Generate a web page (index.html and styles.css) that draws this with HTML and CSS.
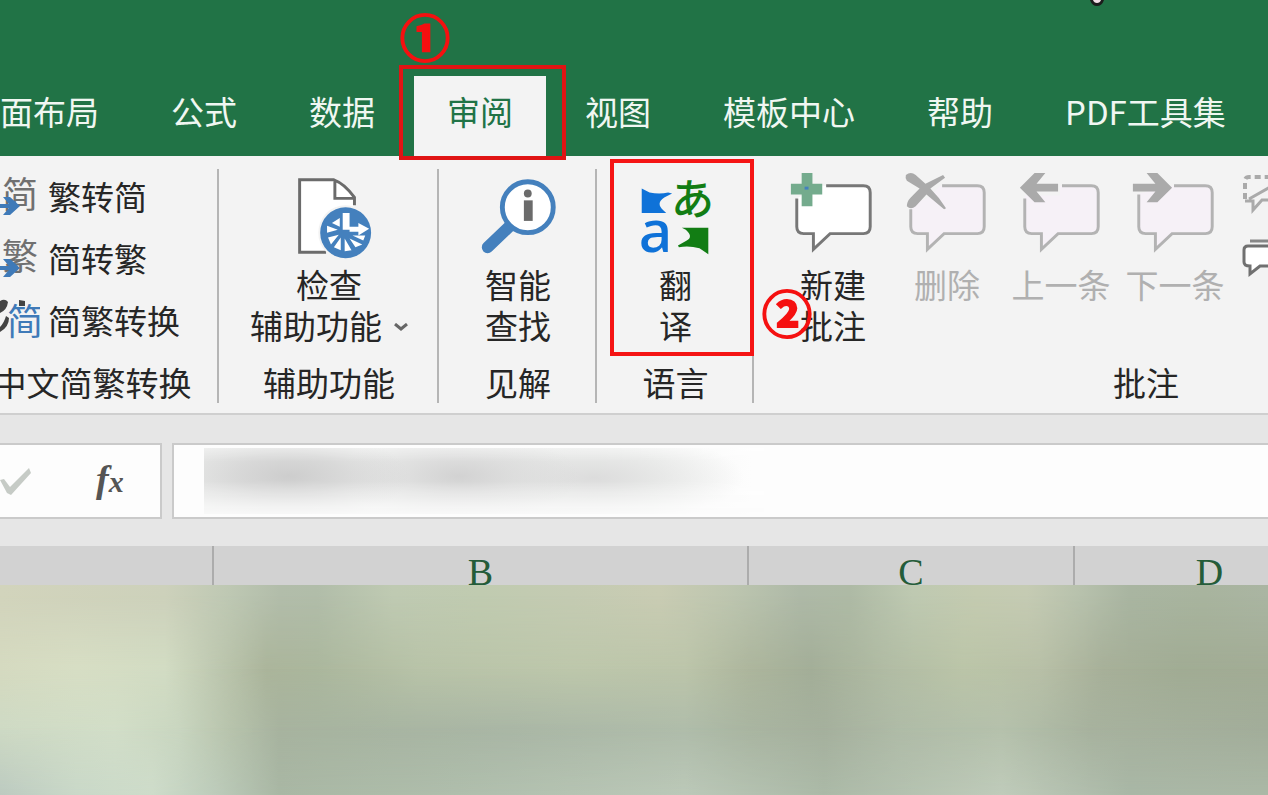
FILE: index.html
```html
<!DOCTYPE html>
<html lang="zh-CN">
<head>
<meta charset="utf-8">
<title>审阅</title>
<link rel="stylesheet" href="styles.css">
</head>
<body>
<header class="titlebar">
  <svg class="pointer" viewBox="0 0 14 6" aria-hidden="true"><path d="M0 0h14q-2 6-7 6T0 0z" fill="#1c1c1c"/><path d="M3 0h8q-1 3-4 3T3 0z" fill="#f4dfe8"/></svg>
  <nav class="tabs">
    <button class="tab">面布局</button>
    <button class="tab">公式</button>
    <button class="tab">数据</button>
    <button class="tab active">审阅<span class="frame frame-tab"></span><span class="step step-one">①</span></button>
    <button class="tab">视图</button>
    <button class="tab">模板中心</button>
    <button class="tab">帮助</button>
    <button class="tab">PDF工具集</button>
  </nav>
</header>

<main class="ribbon">
  <section class="group convert">
    <div class="rows">
      <button class="row"><svg viewBox="0 0 46 46" aria-hidden="true"><text class="glyph" x="8" y="35" fill="#707070">简</text><path d="M0 31h15l-6-7h7l10 9-10 9H9l6-7H0z" fill="#3f7ab8"/></svg>繁转简</button>
      <button class="row"><svg viewBox="0 0 46 46" aria-hidden="true"><text class="glyph" x="8" y="35" fill="#707070">繁</text><path d="M0 31h15l-6-7h7l10 9-10 9H9l6-7H0z" fill="#3f7ab8"/></svg>简转繁</button>
      <button class="row"><svg viewBox="0 0 46 46" aria-hidden="true"><path d="M6 4q5-3 8 1-1 8-8 11zM6 30q4-4 6-11l3 2q0 9-9 14zM25 3l6 1v5h-6z" fill="#444"/><text class="glyph" x="13" y="38" fill="#3f7ab8">简</text></svg>简繁转换</button>
    </div>
    <h2 class="caption">中文简繁转换</h2>
  </section>

  <section class="group access">
    <button class="large">
      <svg viewBox="0 0 90 96" aria-hidden="true">
        <path d="M15 10h35q10 2 21 20v54H15z" fill="#fff"/>
        <path d="M42 84H15V10h35q11 4 21 18v8M51 11v18h19" fill="none" stroke="#6b6b6b" stroke-width="3"/>
        <circle cx="62" cy="64" r="28" fill="#f3f3f3"/>
        <circle cx="62" cy="64" r="26" fill="#4480bd"/>
        <g fill="#fff">
          <path d="M59 44h7v17h-7zM66 58h9v-4l11 6-11 7v-4h-9z"/>
          <path d="M56 49v9l-8-4zM54 61l-11-4v7zM44 69l11-3-8 10zM50 79l7-10v13zM61 83V70l7 12zM72 79l-6-9 13 6zM80 72l-11-5h13z"/>
        </g>
      </svg>
      <span class="label">检查<br>辅助功能<svg class="chevron" viewBox="0 0 14 8" aria-hidden="true"><path d="M1 1l6 5 6-5" fill="none" stroke="#666" stroke-width="3"/></svg></span>
    </button>
    <h2 class="caption">辅助功能</h2>
  </section>

  <section class="group insight">
    <button class="large">
      <svg viewBox="0 0 90 96" aria-hidden="true">
        <path d="M37 57L14 79" stroke="#4480bd" stroke-width="12" stroke-linecap="round"/>
        <circle cx="55" cy="38" r="26" fill="#fff" stroke="#4480bd" stroke-width="5"/>
        <circle cx="55" cy="24" r="4" fill="#6b6b6b"/><path d="M51 31h9v21h-9z" fill="#6b6b6b"/>
      </svg>
      <span class="label">智能<br>查找</span>
    </button>
    <h2 class="caption">见解</h2>
  </section>

  <section class="group language">
    <button class="large">
      <svg viewBox="0 0 90 96" aria-hidden="true">
        <path d="M10 19l8 4q10 2 19 0l4 1-8 4q-9 6-1 13l3 3H10z" fill="#0f72d8"/>
        <path d="M78 86l-9-6q-11-3-21-1l-1-2 9-5q7-4-1-11l-4-2h27z" fill="#127d14"/>
        <text class="kana" x="40" y="46">あ</text>
        <text class="latin" x="7" y="84">a</text>
      </svg>
      <span class="label">翻<br>译</span>
      <span class="frame frame-button"></span>
    </button>
    <h2 class="caption">语言</h2>
  </section>

  <section class="group comments">
    <div class="buttons">
      <button class="large">
        <svg viewBox="0 0 90 96" aria-hidden="true">
          <path d="M8 29V58q0 7 7 7h10v16l17-16h34q7 0 7-7V23q0-7-7-7H30z" fill="#fff"/>
          <path d="M8 29V58q0 7 7 7h10v16l17-16h34q7 0 7-7V23q0-7-7-7H38" fill="none" stroke="#777" stroke-width="3"/>
          <path d="M13 3h11v11h10v11H24v12H13V25H2V14h11z" fill="#74ab8d"/><path d="M16 17h4v3h-4z" fill="#4480bd"/>
        </svg>
        <span class="label">新建<br>批注</span>
        <span class="step step-two">②</span>
      </button>
      <button class="large" disabled>
        <svg viewBox="0 0 90 96" aria-hidden="true">
          <path d="M8 36V58q0 7 7 7h10v16l17-16h34q7 0 7-7V23q0-7-7-7H38L26 28z" fill="#f6f1f7"/>
          <path d="M8 40V58q0 7 7 7h10v16l17-16h34q7 0 7-7V23q0-7-7-7H40" fill="none" stroke="#b3b3b3" stroke-width="3"/>
          <path d="M3 5q5-4 10 0l10 9L41 5l2 3-15 11q9 9 16 20l-2 1-18-15-11 12q-5 4-9 0 0-5 4-9l9-9L4 11q-2-3-1-6z" fill="#aaa"/>
        </svg>
        <span class="label">删除</span>
      </button>
      <button class="large" disabled>
        <svg viewBox="0 0 90 96" aria-hidden="true">
          <path d="M8 26V58q0 7 7 7h10v16l17-16h34q7 0 7-7V23q0-7-7-7H44v10z" fill="#f6f1f7"/>
          <path d="M8 29V58q0 7 7 7h10v16l17-16h34q7 0 7-7V23q0-7-7-7H46" fill="none" stroke="#b3b3b3" stroke-width="3"/>
          <path d="M3 18L18 3h11L20 14h22v8H20l9 11H18z" fill="#aaa"/>
        </svg>
        <span class="label">上一条</span>
      </button>
      <button class="large" disabled>
        <svg viewBox="0 0 90 96" aria-hidden="true">
          <path d="M8 24V58q0 7 7 7h10v16l17-16h34q7 0 7-7V23q0-7-7-7H42z" fill="#f6f1f7"/>
          <path d="M8 25V58q0 7 7 7h10v16l17-16h34q7 0 7-7V23q0-7-7-7H44" fill="none" stroke="#b3b3b3" stroke-width="3"/>
          <path d="M42 18L27 3H16l9 11H2v8h23l-9 11h11z" fill="#aaa"/>
        </svg>
        <span class="label">下一条</span>
      </button>
      <div class="minis">
        <button class="mini" aria-label="显示/隐藏批注"><svg viewBox="0 0 60 44" aria-hidden="true"><path d="M3 25V7q0-4 4-4h53" fill="none" stroke="#aaa" stroke-width="4" stroke-dasharray="6 4"/><path d="M3 27h8v9l9-10h40M7 25L30 12" fill="none" stroke="#aaa" stroke-width="3"/></svg></button>
        <button class="mini" aria-label="显示所有批注"><svg viewBox="0 0 60 44" aria-hidden="true"><path d="M60 8H6Q2 8 2 12v12q0 4 6 4v8l10-8h42z" fill="#fff" stroke="#707070" stroke-width="3"/><path d="M8 3h52" stroke="#888" stroke-width="3"/></svg></button>
      </div>
    </div>
    <h2 class="caption">批注</h2>
  </section>
</main>

<div class="formulabar">
  <div class="tools">
    <button class="tool" aria-label="输入"><svg viewBox="0 0 32 30" aria-hidden="true"><path d="M0 14l4-1 6 8L29 2l2 5-20 22-4-2z" fill="#c6cbc6"/></svg></button>
    <button class="tool fx"><i>f</i><sub>x</sub></button>
  </div>
  <div class="entry"><input class="formula" type="text" aria-label="编辑栏"><span class="smudge"></span></div>
</div>

<div class="sheet">
  <div class="columns">
    <div class="col col-a"></div>
    <div class="col col-b">B</div>
    <div class="col col-c">C</div>
    <div class="col col-d">D</div>
  </div>
  <div class="cells"><span class="tone tone-top"></span><span class="tone tone-mid"></span><span class="tone tone-low"></span><span class="tone tone-end"></span></div>
</div>
</body>
</html>
```
FILE: styles.css
```css
* { box-sizing: border-box; }
body {
  margin: 0;
  height: 100vh;
  display: flex;
  flex-direction: column;
  overflow: hidden;
  background: #e6e6e6;
  color: #262626;
  font-family: "Noto Sans CJK SC", "Noto Sans", sans-serif;
  font-size: 33px;
}
button {
  margin: 0;
  padding: 0;
  border: 0;
  background: none;
  color: inherit;
  font: inherit;
}
svg { display: block; flex: none; }

/* Title bar and tabs */
.titlebar {
  position: relative;
  z-index: 2;
  flex: none;
  padding-top: 76px;
  background: #217346;
}
.pointer {
  position: absolute;
  top: 0;
  left: 1090px;
  width: 14px;
  height: 6px;
}
.tabs {
  display: flex;
  gap: 6px;
  margin-left: -33px;
}
.tab {
  position: relative;
  flex: none;
  height: 80px;
  padding: 0 33px 10px;
  color: #f0f7f2;
  line-height: 70px;
  white-space: nowrap;
}
.tab.active { background: #f3f3f3; color: #217346; }

/* Callouts */
.frame { position: absolute; border: 4px solid #f51414; pointer-events: none; }
.frame-tab { inset: -11px -20px -4px -15px; border-color: #e01414; }
.frame-button { top: 3px; left: 13px; right: 0; height: 197px; }
.step {
  position: absolute;
  color: #f51010;
  font-size: 50px;
  font-weight: 700;
  line-height: 52px;
  -webkit-text-stroke: 2px #f51010;
}
.step-one { top: -67px; left: -14px; }
.step-two { top: 129px; left: -14px; }

/* Ribbon */
.ribbon {
  display: flex;
  flex: none;
  overflow: hidden;
  background: #f3f3f3;
  border-bottom: 2px solid #cfcfcf;
}
.group {
  position: relative;
  flex: none;
  display: flex;
  flex-direction: column;
  padding-bottom: 10px;
}
.group::after {
  content: "";
  position: absolute;
  right: 0;
  top: 13px;
  bottom: 10px;
  width: 2px;
  background: #b5b5b5;
}
.convert { width: 253px; margin-left: -34px; }
.access { width: 220px; }
.insight { width: 158px; }
.language { width: 157px; }
.comments { width: 784px; }
.caption {
  margin: 16px 0 0;
  font-size: 33px;
  font-weight: 400;
  line-height: 41px;
  text-align: center;
  white-space: nowrap;
}
.rows { height: 190px; padding: 9px 0 0 28px; }
.row {
  display: flex;
  align-items: center;
  gap: 8px;
  height: 62px;
  white-space: nowrap;
}
.row svg { width: 46px; height: 46px; }
.glyph { font-size: 36px; font-weight: 400; }
.large {
  position: relative;
  display: flex;
  flex-direction: column;
  align-items: center;
  height: 190px;
  padding-top: 14px;
  line-height: 41px;
  white-space: nowrap;
}
.large > svg { width: 90px; height: 94px; overflow: visible; }
.large:disabled { color: #b0b0b0; }
.language .frame-button { z-index: 1; }
.kana { fill: #127d14; font-size: 44px; font-weight: 500; }
.latin { fill: #0f72d8; font-family: "Noto Sans", sans-serif; font-size: 60px; font-weight: 500; }
.chevron { display: inline-block; width: 14px; height: 8px; margin-left: 12px; vertical-align: 8px; }
.buttons { display: flex; padding-left: 22px; }
.buttons .large { width: 114px; }
.minis { display: flex; flex-direction: column; gap: 20px; padding: 18px 0 0 10px; }
.mini svg { width: 60px; height: 44px; }

/* Formula bar */
.formulabar {
  display: flex;
  flex: none;
  gap: 10px;
  padding: 28px 0 27px;
}
.tools {
  display: flex;
  flex: none;
  align-items: center;
  gap: 64px;
  width: 162px;
  height: 76px;
  background: #fdfdfd;
  border: 2px solid #cacaca;
  border-left: 0;
}
.tool svg { width: 32px; height: 30px; }
.fx {
  padding-bottom: 4px;
  color: #555;
  font-family: "Liberation Serif", serif;
  font-size: 38px;
  font-style: italic;
  font-weight: 700;
  line-height: 40px;
}
.fx sub { font-size: 30px; line-height: 20px; vertical-align: baseline; }
.entry { position: relative; flex: 1; height: 76px; }
.formula {
  width: 100%;
  height: 100%;
  padding: 0 32px;
  background: #fdfdfd;
  border: 2px solid #cacaca;
  border-right: 0;
  font: inherit;
}
.smudge {
  position: absolute;
  top: 5px;
  left: 32px;
  width: 560px;
  height: 66px;
  background:
    radial-gradient(ellipse 120px 46px at 85px 28px, #cdcdcd 0, #d2d2d2bb 45%, #e5e7e600 100%),
    radial-gradient(ellipse 120px 46px at 255px 28px, #d2d2d2 0, #d8d8d8aa 45%, #e8eae900 100%),
    radial-gradient(ellipse 150px 46px at 390px 30px, #dcdcdc 0, #e2e3e2aa 50%, #fdfdfd00 100%),
    linear-gradient(90deg, #e9eae9 0, #eeefee 60%, #f6f7f6 80%, #fdfdfd 98%);
  mask-image: linear-gradient(#000a 0, #000 20%, #000 50%, #0003 100%);
  pointer-events: none;
}

/* Sheet */
.sheet { display: flex; flex: 1; flex-direction: column; min-height: 0; }
.columns { display: flex; flex: none; height: 39px; overflow: hidden; background: #d2d2d2; }
.col {
  flex: none;
  padding-top: 6px;
  border-right: 2px solid #acacac;
  color: #245c39;
  font-family: "Liberation Serif", "DejaVu Serif", serif;
  font-size: 38px;
  line-height: 40px;
  text-align: center;
}
.col-a { width: 214px; }
.col-b { width: 535px; }
.col-c { width: 326px; }
.col-d { width: 271px; }
.cells { position: relative; flex: 1; overflow: hidden; }
.tone { position: absolute; inset: 0; }
.tone-top { background: linear-gradient(90deg, #d2d4bc 0, #cdd1bb 13%, #bec8b3 18%, #b2bdaa 22%, #b1bda9 25%, #bfcab2 31%, #c0cbb0 38%, #c4cbb2 45%, #c9ccb3 52%, #bcc5af 58%, #aeb9a7 63%, #aebaa5 67%, #bec9b1 72%, #c4cbb0 77%, #c5cbb3 81%, #b8c2ad 85%, #a9b5a1 89%, #a8b49e 95%, #aab5a2); }
.tone-mid {
  background: linear-gradient(90deg, #d5dac0 0, #d7dec4 6%, #d2dcc3 13%, #bec8b0 17%, #abb59b 21%, #abb79d 25%, #b8c3a8 33%, #bdc7ab 45%, #bcc5aa 54%, #adb69d 59%, #a3ae98 64%, #b1bca4 70%, #bbc5a8 76%, #b8c0a7 82%, #a7b099 87%, #a1ac94 93%, #a2ac95);
  mask-image: linear-gradient(transparent 5%, #000 40%);
}
.tone-low {
  background: linear-gradient(90deg, #cedac4 0, #d2dec8 9%, #c9d6c0 14%, #b8c4ad 18%, #a7b39f 22%, #a7b4a0 26%, #a9b6a5 40%, #afbcaa 54%, #a9b5a1 59%, #a5b09d 65%, #afbba7 71%, #b5c1ac 79%, #a7b29e 86%, #a2ad9a);
  mask-image: linear-gradient(transparent 40%, #000 70%);
}
.tone-end {
  background: linear-gradient(90deg, #bccac0 0, #c9d8c8 6%, #cedcca 12%, #bccbba 17%, #a9b7a4 22%, #afbeac 36%, #bbc8b8 54%, #abb9a7 65%, #bfcbba 79%, #a9b7a6 89%, #abb8a6);
  mask-image: linear-gradient(transparent 68%, #000 100%);
}
```
